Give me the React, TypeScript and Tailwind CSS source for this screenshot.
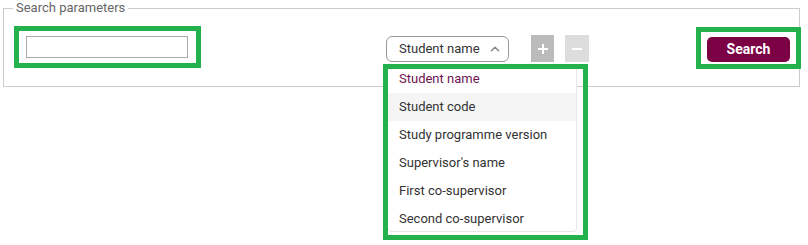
import { ChevronUp } from 'lucide-react';

const options = [
  'Student name',
  'Student code',
  'Study programme version',
  "Supervisor's name",
  'First co-supervisor',
  'Second co-supervisor',
];

export default function App() {
  return (
    <div className="w-[808px] h-[245px] bg-white font-['Roboto',sans-serif] text-[13px] text-[#333]">
      <fieldset className="ml-[3px] w-[797px] border border-[#cccccc]">
        <legend className="ml-[9px] px-[3px] text-[13px] leading-[16px] text-[#666]">Search parameters</legend>

        <div className="flex items-start h-[70px]">
          {/* text input */}
          <div className="ml-[10px] mt-[10px] w-[187px] h-[42px] border-[5px] border-[#22b14c] pl-[7px] pt-[5px]">
            <input type="text" className="block w-[162px] h-[22px] border border-[#aaaaaa] bg-white outline-none" />
          </div>

          {/* field select */}
          <div className="relative ml-[185px] mt-[20px]">
            <button className="flex items-center w-[123px] h-[26px] pl-[12px] border border-[#999] rounded-[6px] bg-white text-[13px] text-[#333]">
              Student name
              <ChevronUp size={14} strokeWidth={2.6} className="ml-[8px] text-[#888]" />
            </button>

            <div className="absolute left-[2px] top-[29px] w-[189px] h-[167px] bg-white border-r border-b border-[#e6e6e6] rounded-b-[4px] z-10">
              {options.map((o, i) => (
                <div
                  key={o}
                  className={
                    'h-[28px] flex items-center pl-[11px] ' +
                    (i === 0 ? 'text-[#6e1450]' : 'text-[#333]') +
                    (i === 1 ? ' bg-[#f5f5f5]' : '')
                  }
                >
                  {o}
                </div>
              ))}
            </div>
            <div className="absolute left-[-3px] top-[28px] w-[205px] h-[176px] border-[5px] border-[#22b14c] z-20 pointer-events-none" />
          </div>

          <button className="relative ml-[22px] mt-[19px] w-[23px] h-[27px] bg-[#bbbbbb] flex items-center justify-center">
            <span className="absolute w-[10px] h-[2px] bg-white" />
            <span className="absolute w-[2px] h-[10px] bg-white" />
          </button>
          <button className="ml-[11px] mt-[19px] w-[24px] h-[27px] bg-[#dddddd] flex items-center justify-center">
            <span className="block w-[10px] h-[2px] bg-white" />
          </button>

          {/* search */}
          <div className="ml-auto mr-[-2px] mt-[11px] w-[105px] h-[42px] border-[5px] border-[#22b14c] pl-[6px] pt-[5px] bg-white">
            <button className="w-[83px] h-[25px] rounded-[5px] bg-[#7b0044] text-white font-bold text-[14px]">
              Search
            </button>
          </div>
        </div>
      </fieldset>
    </div>
  );
}
